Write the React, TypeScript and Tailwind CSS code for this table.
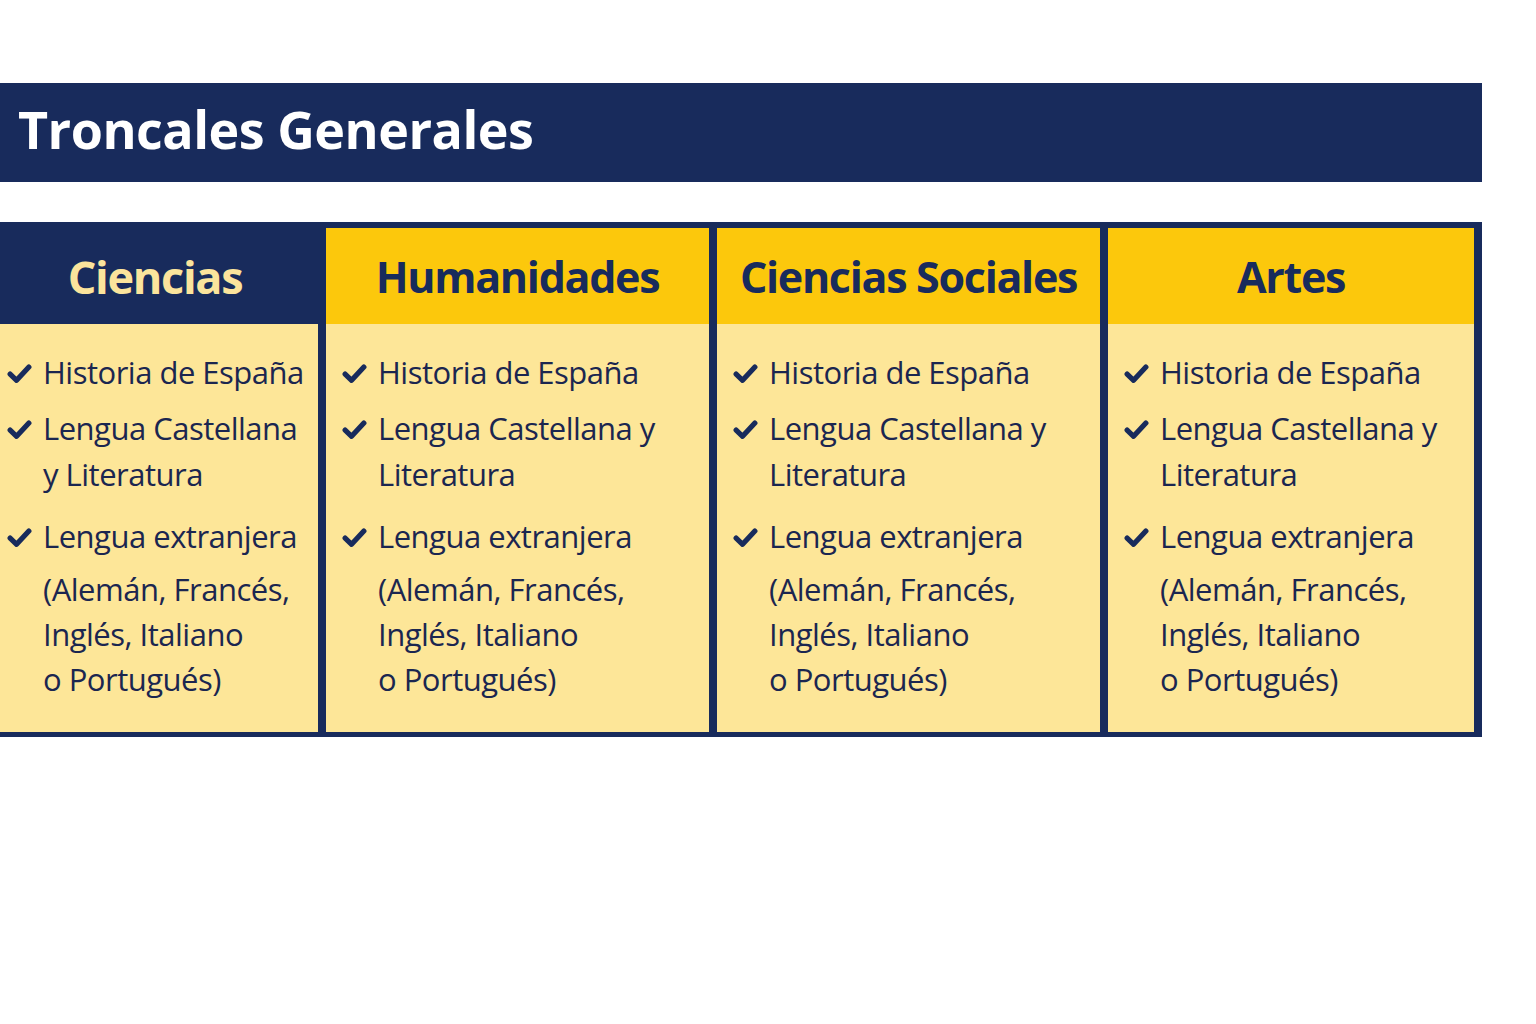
import React from 'react';

const NAVY = 'bg-[#182b5c]';

interface Column {
  title: string;
  dark?: boolean;
  castellana: string[];
}

const columns: Column[] = [
  { title: 'Ciencias', dark: true, castellana: ['Lengua Castellana', 'y Literatura'] },
  { title: 'Humanidades', castellana: ['Lengua Castellana y', 'Literatura'] },
  { title: 'Ciencias Sociales', castellana: ['Lengua Castellana y', 'Literatura'] },
  { title: 'Artes', castellana: ['Lengua Castellana y', 'Literatura'] },
];

function Check() {
  return (
    <svg viewBox="0 0 24 24" className="w-[25px] h-[25px] shrink-0 mt-[12px]" fill="none">
      <path d="M3 12.5 L9.2 18.5 L21 5.8" stroke="#182b5c" strokeWidth="5" strokeLinecap="round" strokeLinejoin="round" />
    </svg>
  );
}

function Item({ lines, pad }: { lines: string[]; pad: string }) {
  return (
    <div className={`flex items-start ${pad}`}>
      <Check />
      <div className="pl-[11px]">
        {lines.map(l => (
          <div key={l} className="leading-[46px] whitespace-nowrap">{l}</div>
        ))}
      </div>
    </div>
  );
}

export default function App() {
  return (
    <div className="min-h-screen bg-white pt-[83px]" style={{ fontFamily: '"Open Sans", "Noto Sans", sans-serif' }}>
      {/* Title bar */}
      <div className={`w-[1482px] h-[99px] ${NAVY} flex items-center pl-[18px]`}>
        <h1 className="text-white font-bold text-[52px] tracking-[-0.5px] leading-none pb-[7px]">Troncales Generales</h1>
      </div>

      {/* Table */}
      <div className={`mt-[40px] w-[1482px] ${NAVY} pt-[6px] pr-[7px] pb-[5px] grid grid-cols-[318px_383px_383px_366px] gap-x-[8px]`}>
        {columns.map((c, i) => (
          <div key={c.title} className="flex flex-col">
            <div className={`h-[96px] flex items-center justify-center ${c.dark ? 'bg-[#182b5c]' : 'bg-[#fcc80c]'}`}>
              <span className={`font-bold tracking-[-1.3px] leading-none ${c.dark ? 'text-[45px] text-[#fbe49c] pr-[8px]' : 'text-[43px] text-[#182b5c]'}`}>
                {c.title}
              </span>
            </div>
            <div className={`h-[408px] bg-[#fde698] text-[#1b2650] text-[31px] tracking-[-0.5px] pt-[25px] ${i === 0 ? 'pl-[7px]' : 'pl-[16px]'}`}>
              <Item lines={['Historia de España']} pad="" />
              <Item lines={c.castellana} pad="mt-[10px]" />
              <Item lines={['Lengua extranjera']} pad="mt-[16px]" />
              <div className="pl-[36px] mt-[8px]">
                <div className="leading-[45px]">(Alemán, Francés,</div>
                <div className="leading-[45px]">Inglés, Italiano</div>
                <div className="leading-[45px]">o Portugués)</div>
              </div>
            </div>
          </div>
        ))}
      </div>
    </div>
  );
}
